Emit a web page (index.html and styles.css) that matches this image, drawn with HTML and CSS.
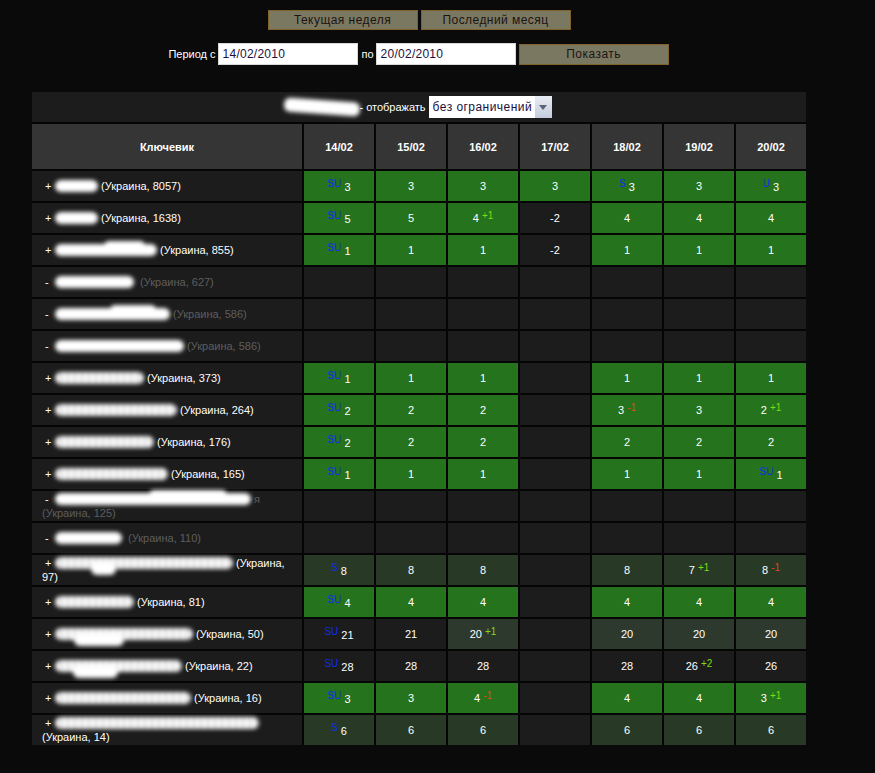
FILE: index.html
```html
<!DOCTYPE html>
<html lang="ru">
<head>
<meta charset="utf-8">
<title>Позиции</title>
<link rel="stylesheet" href="styles.css">
</head>
<body>
<main class="page">
  <div class="quick">
    <button class="btn">Текущая неделя</button>
    <button class="btn">Последний месяц</button>
  </div>
  <form class="period">
    <label class="lbl">Период с</label>
    <input class="date" value="14/02/2010">
    <label class="lbl lbl-to">по</label>
    <input class="date" value="20/02/2010">
    <button class="btn show" type="button">Показать</button>
  </form>
  <table class="grid">
    <colgroup><col class="c-kw"><col class="c-d"><col class="c-d"><col class="c-d"><col class="c-d"><col class="c-d"><col class="c-d"><col class="c-d"></colgroup>
    <thead>
      <tr><td class="cap" colspan="8"><div class="capin"><span class="blob w76 tilt"></span><span>- отображать</span><span class="sel"><select class="selbox"><option>без ограничений</option></select><span class="arrow"></span></span></div></td></tr>
      <tr class="head"><th class="kw">Ключевик</th><th>14/02</th><th>15/02</th><th>16/02</th><th>17/02</th><th>18/02</th><th>19/02</th><th>20/02</th></tr>
    </thead>
    <tbody>
      <tr><td class="k"><span class="sg">+</span><span class="blob w43"></span> (Украина, 8057)</td><td class="g"><span class="mk">SU</span> 3</td><td class="g">3</td><td class="g">3</td><td class="g">3</td><td class="g"><span class="mk">S</span> 3</td><td class="g">3</td><td class="g"><span class="mk">U</span> 3</td></tr>
      <tr><td class="k"><span class="sg">+</span><span class="blob w43"></span> (Украина, 1638)</td><td class="g"><span class="mk">SU</span> 5</td><td class="g">5</td><td class="g">4 <span class="up">+1</span></td><td>-2</td><td class="g">4</td><td class="g">4</td><td class="g">4</td></tr>
      <tr><td class="k"><span class="sg">+</span><span class="blob w102 hump"></span> (Украина, 855)</td><td class="g"><span class="mk">SU</span> 1</td><td class="g">1</td><td class="g">1</td><td>-2</td><td class="g">1</td><td class="g">1</td><td class="g">1</td></tr>
      <tr class="off"><td class="k"><span class="sg">-</span><span class="blob w79"></span> &nbsp;(Украина, 627)</td><td></td><td></td><td></td><td></td><td></td><td></td><td></td></tr>
      <tr class="off"><td class="k"><span class="sg">-</span><span class="blob w115 hump"></span> (Украина, 586)</td><td></td><td></td><td></td><td></td><td></td><td></td><td></td></tr>
      <tr class="off"><td class="k"><span class="sg">-</span><span class="blob w129"></span> (Украина, 586)</td><td></td><td></td><td></td><td></td><td></td><td></td><td></td></tr>
      <tr><td class="k"><span class="sg">+</span><span class="blob w89 mot"></span> (Украина, 373)</td><td class="g"><span class="mk">SU</span> 1</td><td class="g">1</td><td class="g">1</td><td></td><td class="g">1</td><td class="g">1</td><td class="g">1</td></tr>
      <tr><td class="k"><span class="sg">+</span><span class="blob w122 mot"></span> (Украина, 264)</td><td class="g"><span class="mk">SU</span> 2</td><td class="g">2</td><td class="g">2</td><td></td><td class="g">3 <span class="dn">-1</span></td><td class="g">3</td><td class="g">2 <span class="up">+1</span></td></tr>
      <tr><td class="k"><span class="sg">+</span><span class="blob w99 mot"></span> (Украина, 176)</td><td class="g"><span class="mk">SU</span> 2</td><td class="g">2</td><td class="g">2</td><td></td><td class="g">2</td><td class="g">2</td><td class="g">2</td></tr>
      <tr><td class="k"><span class="sg">+</span><span class="blob w113 mot"></span> (Украина, 165)</td><td class="g"><span class="mk">SU</span> 1</td><td class="g">1</td><td class="g">1</td><td></td><td class="g">1</td><td class="g">1</td><td class="g"><span class="mk">SU</span> 1</td></tr>
      <tr class="off"><td class="k"><span class="sg">-</span><span class="blob w196 hump"></span> я (Украина, 125)</td><td></td><td></td><td></td><td></td><td></td><td></td><td></td></tr>
      <tr class="off"><td class="k"><span class="sg">-</span><span class="blob w67"></span> &nbsp;(Украина, 110)</td><td></td><td></td><td></td><td></td><td></td><td></td><td></td></tr>
      <tr><td class="k"><span class="sg">+</span><span class="blob w178 mot drop-s"></span> (Украина, 97)</td><td class="d"><span class="mk">S</span> 8</td><td class="d">8</td><td class="d">8</td><td></td><td class="d">8</td><td class="d">7 <span class="up">+1</span></td><td class="d">8 <span class="dn">-1</span></td></tr>
      <tr><td class="k"><span class="sg">+</span><span class="blob w79 mot"></span> (Украина, 81)</td><td class="g"><span class="mk">SU</span> 4</td><td class="g">4</td><td class="g">4</td><td></td><td class="g">4</td><td class="g">4</td><td class="g">4</td></tr>
      <tr><td class="k"><span class="sg">+</span><span class="blob w138 mot drop"></span> (Украина, 50)</td><td><span class="mk">SU</span> 21</td><td>21</td><td class="m">20 <span class="up">+1</span></td><td></td><td class="m">20</td><td class="m">20</td><td class="m">20</td></tr>
      <tr><td class="k"><span class="sg">+</span><span class="blob w127 mot drop"></span> (Украина, 22)</td><td><span class="mk">SU</span> 28</td><td>28</td><td>28</td><td></td><td>28</td><td>26 <span class="up">+2</span></td><td>26</td></tr>
      <tr><td class="k"><span class="sg">+</span><span class="blob w136 mot"></span> (Украина, 16)</td><td class="g"><span class="mk">SU</span> 3</td><td class="g">3</td><td class="g">4 <span class="dn">-1</span></td><td></td><td class="g">4</td><td class="g">4</td><td class="g">3 <span class="up">+1</span></td></tr>
      <tr><td class="k"><span class="sg">+</span><span class="blob w204 mot"></span> (Украина, 14)</td><td class="d"><span class="mk">S</span> 6</td><td class="d">6</td><td class="d">6</td><td></td><td class="d">6</td><td class="d">6</td><td class="d">6</td></tr>
    </tbody>
  </table>
</main>
</body>
</html>
```
FILE: styles.css
```css
* { box-sizing: border-box; }
html, body { margin: 0; background: #0a0a0a; }
body { color: #fff; font: 11px/14px "Liberation Sans", Arial, sans-serif; }
.page { width: 774px; margin-left: 32px; padding-top: 10px; }

.quick { display: flex; justify-content: center; gap: 3px; height: 20px; }
.btn {
  width: 150px; height: 20px; padding: 0;
  background: #7b7861; border: 1px solid #80622a; border-radius: 0;
  color: #1b1414; font: 12px/18px "Liberation Sans", Arial, sans-serif; letter-spacing: .45px;
}
.period { display: flex; justify-content: center; align-items: center; height: 22px; margin: 13px 0 27px; padding-right: 1px; }
.lbl { margin: 0 2px 0 0; }
.lbl-to { margin-left: 1px; }
.date {
  width: 140px; height: 22px; margin-right: 3px; padding: 0 0 0 4px;
  background: #fff; border: 1px solid #d8d8d8; border-radius: 0; outline: 0;
  color: #1c1040; font: 12px "Liberation Sans", Arial, sans-serif; letter-spacing: .25px;
}
.show { height: 21px; }

.grid { width: 774px; table-layout: fixed; border-collapse: separate; border-spacing: 0; background: #050505; }
.c-kw { width: 270px; }
.c-d { width: 72px; }
.grid td, .grid th { border: 0 solid #050505; border-width: 0 0 2px 2px; padding: 0; text-align: center; background-clip: padding-box; background-color: #1c1c1c; }
.grid tr > :first-child { border-left-width: 0; }
.grid tbody tr:last-child > * { border-bottom-width: 0; height: 30px; }

.cap { height: 32px; }
.capin { display: flex; justify-content: center; align-items: center; height: 30px; padding-right: 2px; }
.capin > span + span { margin-left: 3px; }
.capin > .blob + span { margin-left: -1px; }
.sel { display: flex; width: 123px; height: 22px; background: #fff; }
.selbox { appearance: none; -webkit-appearance: none; width: 106px; height: 22px; padding: 0 0 0 4px; border: 0; border-radius: 0; background: #fff; color: #1c1040; font: 12px "Liberation Sans", Arial, sans-serif; letter-spacing: .45px; }
.arrow { position: relative; width: 17px; height: 22px; background: linear-gradient(#e8ecf4, #c4ccdc); }
.arrow::after { content: ""; position: absolute; left: 4px; top: 9px; border: 4px solid transparent; border-top: 5px solid #5c6474; border-bottom: 0; }

.head th { height: 47px; background: #353535; font-size: 11px; font-weight: bold; color: #fff; }
.grid tbody td { height: 32px; }
.grid td.k { padding: 0 6px 0 10px; text-align: left; }
.sg { display: inline-block; width: 13px; padding-left: 3px; }
.off .k { color: #5e5e5e; }
.off .sg { color: #fff; }

.grid td.g { background-color: #26731d; }
.grid td.d { background-color: #283a26; }
.grid td.m { background-color: #2d392d; }

.mk { display: inline-block; vertical-align: 4px; line-height: 10px; font-size: 10px; color: #0f2ee6; }
.up, .dn { display: inline-block; vertical-align: 3px; line-height: 10px; font-size: 10px; }
.up { color: #7fd916; }
.dn { color: #e4431a; }

.blob {
  position: relative; display: inline-block; height: 12px; vertical-align: -2px;
  background: #fff; border-radius: 6px; filter: blur(2px);
}
.mot { background: repeating-linear-gradient(90deg, #fff 0 5px, #c9c9c9 5px 7px); }
.tilt { transform: rotate(4deg); height: 14px; }
.hump::after, .drop::after, .drop-s::after { content: ""; position: absolute; background: #fff; border-radius: 6px; }
.hump::after { right: 12%; top: -3px; width: 40%; height: 10px; }
.drop::after { left: 14%; top: 5px; width: 36%; height: 13px; }
.drop-s::after { left: 20%; top: 5px; width: 14%; height: 13px; }

.w43 { width: 43px; } .w67 { width: 67px; } .w76 { width: 76px; } .w79 { width: 79px; }
.w89 { width: 89px; } .w99 { width: 99px; } .w102 { width: 102px; }
.w113 { width: 113px; } .w115 { width: 115px; } .w122 { width: 122px; } .w127 { width: 127px; } .w129 { width: 129px; }
.w136 { width: 136px; } .w138 { width: 138px; } .w178 { width: 178px; } .w196 { width: 196px; } .w204 { width: 204px; }
```
